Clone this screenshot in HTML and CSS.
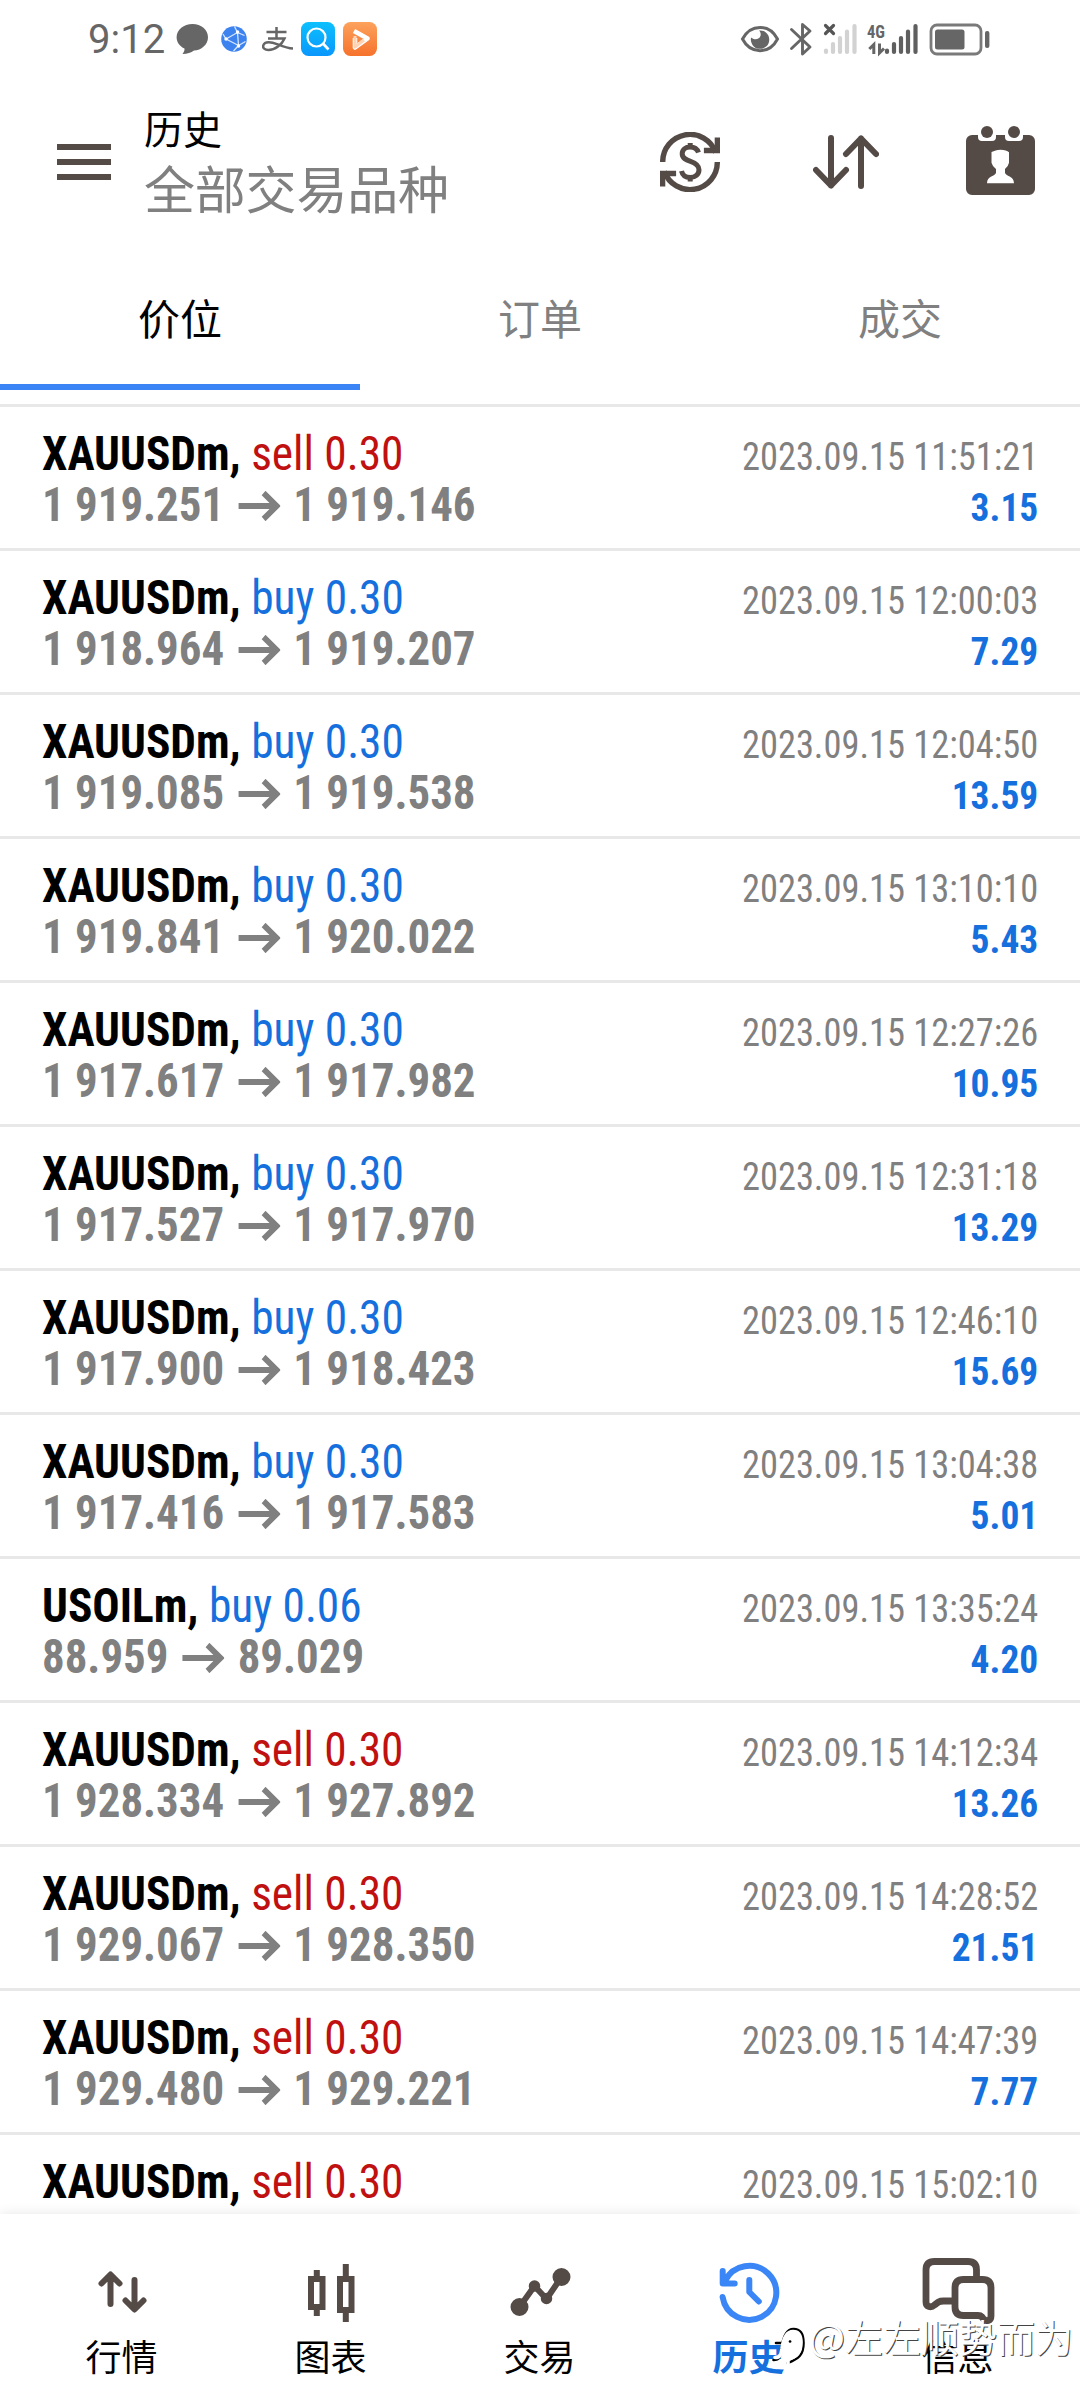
FILE: index.html
```
<!DOCTYPE html>
<html lang="zh-CN">
<head>
<meta charset="utf-8">
<title>历史</title>
<link rel="stylesheet" href="styles.css">
</head>
<body>
<div class="screen">
  <div class="status">
    <span class="clock">9:12</span>
    <svg class="status-left" width="206" height="40" viewBox="174 20 206 40" fill="none">
      <path d="M192.500 24c8.700 0 15.500 5.800 15.500 13.200s-6.800 13.200-14 13.200c-3 2.300-6.500 3.500-11.500 3.500 1.500-1.500 2.200-3.400 2-5.300-4.800-2.300-7.900-6.500-7.900-11.400C176.600 29.800 183.800 24 192.500 24z" fill="#666"/>
      <circle cx="234" cy="39" r="12.800" fill="#3d83f0"/>
      <path d="M226 39L237.500 32.500 238.500 45.500zM226 39l-3-5M237.500 32.500l-3-6M237.500 32.500l7 3M238.500 45.500l-5 5.500M238.500 45.500l7-4" stroke="#d6e6ff" stroke-width="1.300"/>
      <path d="M226 39h.1M237.500 32h.1M238.500 46h.1" stroke="#fff" stroke-width="3.400" stroke-linecap="round"/>
      <path d="M266.500 32h20M276.500 27v11M268 38.500h16.500c-2.500 6-9.500 11.500-16 11.500-4 0-5.800-2-5.300-4.500 1.500-5 8.500-3.500 14.500-1.200 5.500 2.200 10 4 15.300 4.200" stroke="#666" stroke-width="2.500"/>
      <rect x="301" y="22" width="34" height="34" rx="7.500" fill="url(#sky)"/>
      <circle cx="316.500" cy="37.500" r="9" stroke="#fff" stroke-width="2.200"/>
      <path d="M323 43.500l5.500 6" stroke="#fff" stroke-width="2.600"/>
      <rect x="343" y="22" width="34" height="34" rx="7.500" fill="url(#sun)"/>
      <path d="M354 31l13.500 7.500L355 47.500V38" stroke="#fff" stroke-width="4.600" stroke-linejoin="round"/>
      <path d="M355 36v11l9-7" stroke="#ffd3b4" stroke-width="3" stroke-linejoin="round"/>
      <defs>
        <linearGradient id="sky" x2="0" y2="1"><stop stop-color="#0cc0fd"/><stop offset="1" stop-color="#0a97fd"/></linearGradient>
        <linearGradient id="sun" x2="0" y2="1"><stop stop-color="#fca25c"/><stop offset="1" stop-color="#f6722c"/></linearGradient>
      </defs>
    </svg>
    <svg class="status-right" width="254" height="40" viewBox="738 20 254 40" fill="none">
      <path d="M742.500 39c8-15.500 27-15.500 35 0-8 15.500-27 15.500-35 0z" stroke="#666" stroke-width="3"/>
      <path d="M759 30.500a9.200 9.200 0 1 1-7.900 7c3 3 8.500 2.300 9.500-2 .4-2-.3-3.800-1.600-5z" fill="#666"/>
      <path d="M791.500 29.500l18.500 17.500-7.500 7V24.500l7.500 6.500-18.500 17.500" stroke="#666" stroke-width="2.900" stroke-linecap="round" stroke-linejoin="round"/>
      <path d="M825.500 25.500l8 8M833.500 25.500l-8 8" stroke="#555" stroke-width="3.200" stroke-linecap="round"/>
      <path d="M826 50.500v1.500M833 44v8M840 38v14M847 31.500v20.500M854.500 26v26" stroke="#d2d2d2" stroke-width="4.200" stroke-linecap="round"/>
      <text class="net" x="867" y="37.500" textLength="18" lengthAdjust="spacingAndGlyphs">4G</text>
      <path d="M873.800 54V44.500l-4.500 4.500M879.500 43.500v9.500l4.500-4.500" stroke="#666" stroke-width="3"/>
      <path d="M887 50.500v1.500M894 44v8M901 38v14M908 31.500v20.500M915.500 26v26" stroke="#5f5f5f" stroke-width="4.200" stroke-linecap="round"/>
      <rect x="931" y="25" width="50" height="29" rx="6" stroke="#7a7a7a" stroke-width="2.800"/>
      <rect x="935" y="29.500" width="29.500" height="20" rx="2.500" fill="#666"/>
      <rect x="985" y="31" width="4.400" height="17" rx="2" fill="#666"/>
    </svg>
  </div>

  <header class="header">
    <svg class="menu" width="54" height="36" viewBox="0 0 54 36" fill="#544a46"><path d="M0 0h54v6H0zM0 15h54v6H0zM0 30h54v6H0z"/></svg>
    <div class="titles">
      <h1 class="title">历史</h1>
      <div class="subtitle">全部交易品种</div>
    </div>
    <div class="actions">
      <svg width="60" height="60" viewBox="660 132 60 60" fill="none" stroke="#544a46" stroke-width="5.400">
        <path d="M662.700 162a27.300 27.300 0 0 1 53-9.500M717.300 162a27.300 27.300 0 0 1-53 9.500"/>
        <path d="M717.400 137.500v13h-13.500M662.600 186.500v-13h13.500"/>
        <path d="M698.500 152.500c-1.300-3.600-4.500-5.500-8.300-5.500-4.800 0-8 2.700-8 6.800 0 4.500 3.800 6 8.300 7.500s8.500 3.800 8.500 8.500c0 4.600-4 7.700-8.800 7.700-4.600 0-7.800-2.500-8.700-6.500M690.200 143v4.500M690.200 177v4.500" stroke-width="5"/>
      </svg>
      <svg width="66" height="54" viewBox="813 135 66 54" fill="none" stroke="#544a46" stroke-width="6" stroke-linecap="round" stroke-linejoin="round">
        <path d="M831 138v47.500M816 170l15 15.500 15-15.500M861 186v-47.500M846 154l15-15.500 15 15.500"/>
      </svg>
      <svg width="69" height="69" viewBox="966 126 69 69" fill="#544a46">
        <path fill-rule="evenodd" d="M972 135h6v2a4 4 0 0 0 4 4h10a4 4 0 0 0 4-4v-2h9v2a4 4 0 0 0 4 4h10a4 4 0 0 0 4-4v-2h6a6 6 0 0 1 6 6v48a6 6 0 0 1-6 6h-57a6 6 0 0 1-6-6v-48a6 6 0 0 1 6-6zM991.500 152c3-1 5-2.300 9-2.300s7 1 8.500 2.600v10.500l-1.300 3.200-2.700 3v4c2 4 8.700 2.500 9 10.300h-27c.3-7.800 7-6.300 9-10.300v-4l-3-3-1.500-3.200z"/>
        <circle cx="987" cy="132" r="6"/><circle cx="1014" cy="132" r="6"/>
      </svg>
    </div>
  </header>

  <nav class="tabs">
    <div class="tab tab-active">价位</div>
    <div class="tab">订单</div>
    <div class="tab">成交</div>
  </nav>

  <svg class="defs" width="0" height="0"><symbol id="arrow" viewBox="0 0 45 30"><path d="M0 15h40M27 2l14 13-14 13" fill="none" stroke="#808080" stroke-width="6"/></symbol></svg>

  <main class="deals">
    <div class="deal"><div class="name">XAUUSDm, <span class="sell">sell 0.30</span></div><div class="time">2023.09.15 11:51:21</div><div class="price">1 919.251<svg class="to"><use href="#arrow"/></svg>1 919.146</div><div class="profit">3.15</div></div>
    <div class="deal"><div class="name">XAUUSDm, <span class="buy">buy 0.30</span></div><div class="time">2023.09.15 12:00:03</div><div class="price">1 918.964<svg class="to"><use href="#arrow"/></svg>1 919.207</div><div class="profit">7.29</div></div>
    <div class="deal"><div class="name">XAUUSDm, <span class="buy">buy 0.30</span></div><div class="time">2023.09.15 12:04:50</div><div class="price">1 919.085<svg class="to"><use href="#arrow"/></svg>1 919.538</div><div class="profit">13.59</div></div>
    <div class="deal"><div class="name">XAUUSDm, <span class="buy">buy 0.30</span></div><div class="time">2023.09.15 13:10:10</div><div class="price">1 919.841<svg class="to"><use href="#arrow"/></svg>1 920.022</div><div class="profit">5.43</div></div>
    <div class="deal"><div class="name">XAUUSDm, <span class="buy">buy 0.30</span></div><div class="time">2023.09.15 12:27:26</div><div class="price">1 917.617<svg class="to"><use href="#arrow"/></svg>1 917.982</div><div class="profit">10.95</div></div>
    <div class="deal"><div class="name">XAUUSDm, <span class="buy">buy 0.30</span></div><div class="time">2023.09.15 12:31:18</div><div class="price">1 917.527<svg class="to"><use href="#arrow"/></svg>1 917.970</div><div class="profit">13.29</div></div>
    <div class="deal"><div class="name">XAUUSDm, <span class="buy">buy 0.30</span></div><div class="time">2023.09.15 12:46:10</div><div class="price">1 917.900<svg class="to"><use href="#arrow"/></svg>1 918.423</div><div class="profit">15.69</div></div>
    <div class="deal"><div class="name">XAUUSDm, <span class="buy">buy 0.30</span></div><div class="time">2023.09.15 13:04:38</div><div class="price">1 917.416<svg class="to"><use href="#arrow"/></svg>1 917.583</div><div class="profit">5.01</div></div>
    <div class="deal"><div class="name">USOILm, <span class="buy">buy 0.06</span></div><div class="time">2023.09.15 13:35:24</div><div class="price">88.959<svg class="to"><use href="#arrow"/></svg>89.029</div><div class="profit">4.20</div></div>
    <div class="deal"><div class="name">XAUUSDm, <span class="sell">sell 0.30</span></div><div class="time">2023.09.15 14:12:34</div><div class="price">1 928.334<svg class="to"><use href="#arrow"/></svg>1 927.892</div><div class="profit">13.26</div></div>
    <div class="deal"><div class="name">XAUUSDm, <span class="sell">sell 0.30</span></div><div class="time">2023.09.15 14:28:52</div><div class="price">1 929.067<svg class="to"><use href="#arrow"/></svg>1 928.350</div><div class="profit">21.51</div></div>
    <div class="deal"><div class="name">XAUUSDm, <span class="sell">sell 0.30</span></div><div class="time">2023.09.15 14:47:39</div><div class="price">1 929.480<svg class="to"><use href="#arrow"/></svg>1 929.221</div><div class="profit">7.77</div></div>
    <div class="deal"><div class="name">XAUUSDm, <span class="sell">sell 0.30</span></div><div class="time">2023.09.15 15:02:10</div></div>
  </main>

  <nav class="bottom">
    <div class="item">
      <svg class="icon" viewBox="79.500 2256 84 72"><path d="M110 2304v-29M101 2283.500l9-9 9 9M134 2280v29M125 2300.500l9 9 9-9"/></svg>
      <span>行情</span>
    </div>
    <div class="item">
      <svg class="icon butt" viewBox="288.500 2256 84 72"><path d="M310.500 2279h11.500v28h-11.500zM316.300 2270v7M316.300 2309v7M339.500 2279H351v31h-11.500zM345.300 2264v13M345.300 2312v10"/></svg>
      <span>图表</span>
    </div>
    <div class="item">
      <svg class="icon" viewBox="497.500 2256 84 72"><path d="M519 2307l15-21 12 13 15-22"/><path d="M519 2307h.01M561 2277h.01" stroke-width="18"/><path d="M534 2286h.01M546 2298.500h.01" stroke-width="11.500"/></svg>
      <span>交易</span>
    </div>
    <div class="item item-active">
      <svg class="icon" viewBox="706.500 2256 84 72"><path d="M724.500 2281a27 27 0 1 1-2.400 16M722.200 2271v12.500h12M748.800 2280v12l9.500 9.500"/></svg>
      <span>历史</span>
    </div>
    <div class="item">
      <svg class="icon" viewBox="915.500 2256 84 72"><path d="M976 2277v-7q0-8.500-8.500-8.500h-33.500q-8.500 0-8.500 8.500v32c0 5 5 6 8.500 3l4-3q2-1 5-1h9M963 2279.500h19q8.500 0 8.500 8.500v28c0 5-5 6-7.500 3l-1.500-2q-1.500-1.500-4-1.500H963q-8.500 0-8.500-8.500v-19q0-8.500 8.500-8.500z" stroke-width="6.800"/></svg>
      <span>信息</span>
    </div>
  </nav>

  <div class="watermark">
    <svg width="36" height="44" viewBox="772 2322 36 44" fill="none" stroke-linecap="round" stroke-linejoin="round">
      <path d="M773.500 2358c7 0 7-5 8-11 1.500-12 5-20 12-20 7.500 0 10 5 10 14 0 12-5 16-16 20M776 2341h6" stroke="#000" stroke-width="2.600"/>
      <path d="M775 2355.500c6 0 6-4 7-9 1.500-11 5-17 11-17 6.500 0 8 4 8 11 0 10-4 14-13 17v5" stroke="#fff" stroke-width="3.600"/>
      <path d="M790 2339.500h.1" stroke="#000" stroke-width="2.600"/>
    </svg>
    <span>@左左顺势而为</span>
  </div>
</div>
</body>
</html>
```
FILE: styles.css
```
body {
  margin: 0;
  background: #fff;
  color: #000;
  font-family: "Noto Sans CJK SC", sans-serif;
}

.screen {
  position: relative;
  width: 1080px;
  height: 2400px;
  overflow: hidden;
  display: flex;
  flex-direction: column;
}

.status {
  display: flex;
  align-items: center;
  box-sizing: border-box;
  height: 80px;
  padding: 0 88px;
}
.clock {
  width: 86px;
  font: 400 40px/82px Roboto, sans-serif;
  color: #666;
}
.status-left { flex: none; }
.status-right { flex: none; margin-left: auto; }
.net { font: 700 18px "Roboto Condensed", sans-serif; fill: #666; }

.header {
  display: flex;
  align-items: center;
  box-sizing: border-box;
  height: 164px;
  padding: 0 45px 0 57px;
}
.menu { flex: none; }
.titles { margin: -7px 0 0 33px; }
.title {
  margin: 0;
  font-size: 39px;
  font-weight: 400;
  line-height: 57px;
}
.subtitle {
  font-size: 51px;
  line-height: 62px;
  letter-spacing: -.2px;
  color: #808080;
}
.actions {
  display: flex;
  align-items: center;
  margin-left: auto;
  gap: 90px;
}
.actions svg:first-child { margin-right: 3px; }
.actions svg:last-child { margin: -3px 0 0 -3px; }

.tabs {
  display: flex;
  height: 146px;
  margin-bottom: 14px;
}
.tab {
  flex: 1;
  box-sizing: border-box;
  padding-top: 2px;
  border-bottom: 6px solid transparent;
  font-size: 42px;
  line-height: 142px;
  text-align: center;
  color: #808080;
}
.tab-active {
  color: #000;
  border-color: #3b84f6;
}

.defs { position: absolute; }

.deals {
  height: 1810px;
  overflow: hidden;
  font-family: "Roboto Condensed", Roboto, sans-serif;
}
.deal {
  display: grid;
  grid-template-columns: 1fr auto;
  grid-auto-rows: 51px;
  align-items: baseline;
  box-sizing: border-box;
  height: 144px;
  padding: 21px 42px 0 42px;
  border-top: 3px solid #e8e8e8;
  line-height: 51px;
  white-space: nowrap;
}
.name, .price {
  font-size: 48px;
  font-weight: 700;
  transform-origin: left;
}
.name { transform: scaleX(.945); }
.price { color: #808080; transform: scaleX(.935); }
.name span { font-weight: 400; }
.sell { color: #c01010; }
.buy { color: #156fdd; }
.to {
  width: 45px;
  height: 30px;
  margin: 0 14px 0 15px;
}
.time, .profit {
  font-size: 39px;
  text-align: right;
  transform-origin: right;
}
.time { color: #808080; transform: scaleX(.934); }
.profit { color: #156fdd; font-weight: 700; transform: scaleX(.96); }

.bottom {
  position: relative;
  flex: 1;
  display: flex;
  padding: 0 18px 0 17px;
  background: #fff;
  box-shadow: 0 0 12px rgba(0, 0, 0, .1);
}
.item {
  flex: 1;
  display: flex;
  flex-direction: column;
  align-items: center;
  padding-top: 42px;
  font-size: 36px;
  line-height: 54px;
}
.item-active { color: #156fdd; font-weight: 700; }
.icon {
  width: 84px;
  height: 72px;
  fill: none;
  stroke: #544a46;
  stroke-width: 6;
  stroke-linecap: round;
  stroke-linejoin: round;
}
.butt { stroke-linecap: butt; stroke-linejoin: miter; }
.item-active .icon { stroke: #3b86f7; }

/* Author mark floating over the bottom bar */
.watermark {
  position: absolute;
  left: 772px;
  top: 2304px;
  display: flex;
  align-items: center;
  font-size: 38px;
  line-height: 56px;
  color: #fff;
  text-shadow: 1px 1px 0 #444;
  white-space: nowrap;
}
.watermark svg { margin: 20px 1px 0 0; }
```
